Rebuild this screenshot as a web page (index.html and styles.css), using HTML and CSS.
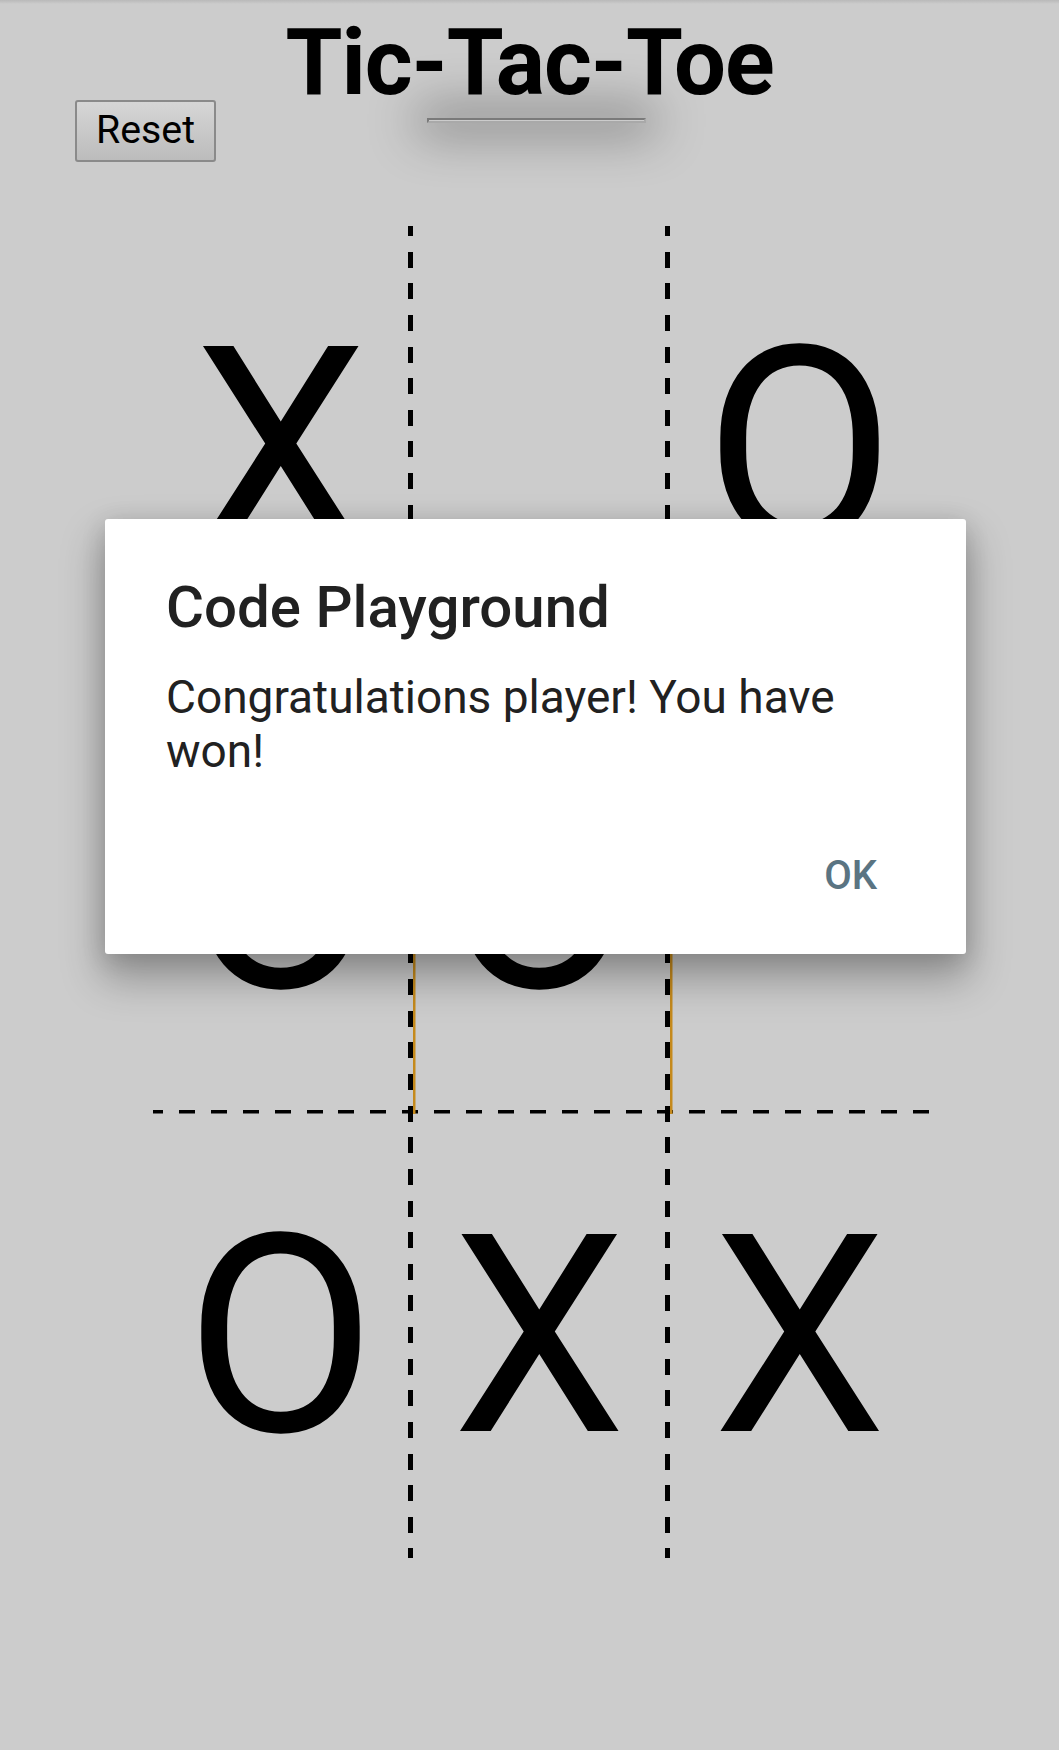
FILE: index.html
```html
<!DOCTYPE html>
<html lang="en">
<head>
<meta charset="utf-8">
<title>Tic-Tac-Toe</title>
<link rel="stylesheet" href="styles.css">
</head>
<body>
<header class="top">
  <h1 class="title">Tic-Tac-Toe</h1>
  <div class="toolbar">
    <button class="reset" type="button">Reset</button>
    <hr class="rule">
  </div>
</header>

<main class="board">
  <div class="cell">X</div>
  <div class="cell col2"></div>
  <div class="cell col3">O</div>
  <div class="cell">O</div>
  <div class="cell col2 hl">O</div>
  <div class="cell col3 hl"></div>
  <div class="cell">O</div>
  <div class="cell col2">X</div>
  <div class="cell col3">X</div>
</main>

<div class="dialog" role="dialog">
  <h2 class="dialog-title">Code Playground</h2>
  <p class="dialog-body">Congratulations player! You have won!</p>
  <div class="dialog-actions">
    <button class="ok" type="button">OK</button>
  </div>
</div>
</body>
</html>
```

FILE: styles.css
```css
html {
  background: #cccccc linear-gradient(#b9b9b9, #cccccc 4px) no-repeat;
}

body {
  margin: 0;
  position: relative;
  min-height: 1750px;
  font-family: Roboto, "Liberation Sans", sans-serif;
  color: #000;
}

.top {
  padding-top: 26px;
}

.title {
  margin: 0;
  text-align: center;
  font: 700 92px/74px Roboto, "Liberation Sans", sans-serif;
  letter-spacing: -1.1px;
  color: #000;
}

.toolbar {
  display: flex;
  align-items: flex-start;
}

.reset {
  margin: 0 0 0 75px;
  box-sizing: border-box;
  width: 141px;
  height: 62px;
  padding: 0;
  border: 2px solid #8a8a8a;
  border-radius: 3px;
  background: linear-gradient(#d6d6d6, #bcbcbc);
  font: 400 39.3px/1 Roboto, "Liberation Sans", sans-serif;
  color: #000;
}

.rule {
  box-sizing: border-box;
  width: 219px;
  height: 5px;
  margin: 18px 0 0 211px;
  border-style: solid;
  border-width: 2.5px;
  border-color: #7a7a7a #a9a9a9 #a9a9a9 #7a7a7a;
  box-shadow: 0 0 50px 10px rgba(0, 0, 0, 0.42);
}

.board {
  display: grid;
  grid-template-columns: 255px 257px 264px;
  grid-template-rows: repeat(3, 444px);
  width: 776px;
  margin: 64px 0 0 153px;
  background-image:
    repeating-linear-gradient(to bottom, #000 0 10px, transparent 10px 25.63px, #000 25.63px 31.63px),
    repeating-linear-gradient(to bottom, #000 0 10px, transparent 10px 25.63px, #000 25.63px 31.63px),
    repeating-linear-gradient(to right, #000 0 10.1px, transparent 10.1px 26px, #000 26px 31.9px),
    repeating-linear-gradient(to right, #000 0 10.1px, transparent 10.1px 26px, #000 26px 31.9px);
  background-size: 5px 100%, 5px 100%, 100% 3.5px, 100% 3.5px;
  background-position: 255px 0, 512px 0, 0 440px, 0 884px;
  background-repeat: no-repeat;
}

.cell {
  display: flex;
  align-items: center;
  justify-content: center;
  font: 400 277px/1 Roboto, "Liberation Sans", sans-serif;
  color: #000;
}

.col2,
.col3 {
  border-left: 5px solid transparent;
}

.hl {
  box-shadow: inset 2.5px 0 0 #c58a1c;
}

.dialog {
  position: absolute;
  left: 105px;
  top: 519px;
  box-sizing: border-box;
  width: 861px;
  height: 435px;
  padding: 60px 60px 0 61px;
  background: #fff;
  border-radius: 3px;
  box-shadow: 0 22px 40px 4px rgba(0, 0, 0, 0.28), 0 4px 24px rgba(0, 0, 0, 0.14);
}

.dialog-title {
  margin: 0 0 33px;
  font: 500 58.2px/57.5px Roboto, "Liberation Sans", sans-serif;
  color: #212121;
}

.dialog-body {
  margin: 0;
  font: 400 46px/normal Roboto, "Liberation Sans", sans-serif;
  color: #212121;
}

.dialog-actions {
  display: flex;
  justify-content: flex-end;
  margin-top: 74px;
  padding-right: 29px;
}

.ok {
  margin: 0;
  padding: 0;
  border: 0;
  background: none;
  font: 500 40px/normal Roboto, "Liberation Sans", sans-serif;
  color: #5a7482;
  text-transform: uppercase;
}
```
